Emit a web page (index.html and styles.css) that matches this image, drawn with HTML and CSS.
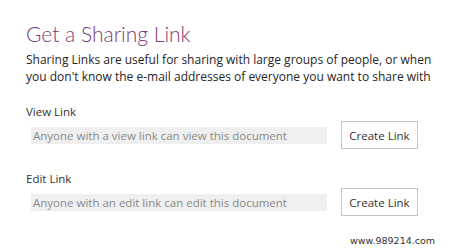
FILE: index.html
```html
<!DOCTYPE html>
<html lang="en">
<head>
	<meta charset="UTF-8">
	<meta name="viewport" content="width=device-width, initial-scale=1.0">
	<title>Get a Sharing Link</title>
	<link rel="stylesheet" href="styles.css">
</head>
<body>
	<div class="panel">
		<h1 class="title">Get a Sharing Link</h1>
		<p class="intro">Sharing Links are useful for sharing with large groups of people, or when you don't know the e-mail addresses of everyone you want to share with</p>

		<div class="link-group">
			<div class="link-label">View Link</div>
			<div class="link-row">
				<div class="link-box">Anyone with a view link can view this document</div>
				<button class="create-btn">Create Link</button>
			</div>
		</div>

		<div class="link-group">
			<div class="link-label">Edit Link</div>
			<div class="link-row">
				<div class="link-box">Anyone with an edit link can edit this document</div>
				<button class="create-btn">Create Link</button>
			</div>
		</div>

		<div class="watermark">www.989214.com</div>
	</div>
</body>
</html>
```

FILE: styles.css
```css
body {
    margin: 0;
    padding: 0;
    background-color: #ffffff;
    font-family: "Open Sans", "Noto Sans", sans-serif;
}
.panel {
    width: 456px;
    height: 248px;
    box-sizing: border-box;
    padding: 21px 0 0 26px;
}
.title {
    margin: 0;
    font-family: Lato, "Open Sans", sans-serif;
    font-size: 21px;
    font-weight: 300;
    color: #7b3a79;
    line-height: 26px;
}
.intro {
    margin: 4px 0 0 0;
    width: 410px;
    font-size: 12px;
    line-height: 17px;
    color: #262626;
}
.link-group {
    margin-top: 19px;
}
.link-group + .link-group {
    margin-top: 22px;
}
.link-label {
    font-size: 11.5px;
    line-height: 16px;
    color: #333333;
}
.link-row {
    display: flex;
    align-items: center;
    gap: 14px;
    margin-top: 1px;
}
.link-box {
    margin-left: 5px;
    width: 296px;
    height: 17px;
    box-sizing: border-box;
    padding-left: 2px;
    background-color: #efefef;
    color: #8a8a8a;
    font-size: 11.5px;
    line-height: 17px;
    white-space: nowrap;
}
.create-btn {
    width: 77px;
    height: 28px;
    padding: 0;
    background-color: #ffffff;
    border: 1px solid #c4c4c4;
    color: #333333;
    font-family: "Open Sans", "Noto Sans", sans-serif;
    font-size: 11.5px;
}
.watermark {
    margin: 19px 0 0 324px;
    font-family: "DejaVu Sans", sans-serif;
    font-size: 9.5px;
    color: #333333;
}
```
